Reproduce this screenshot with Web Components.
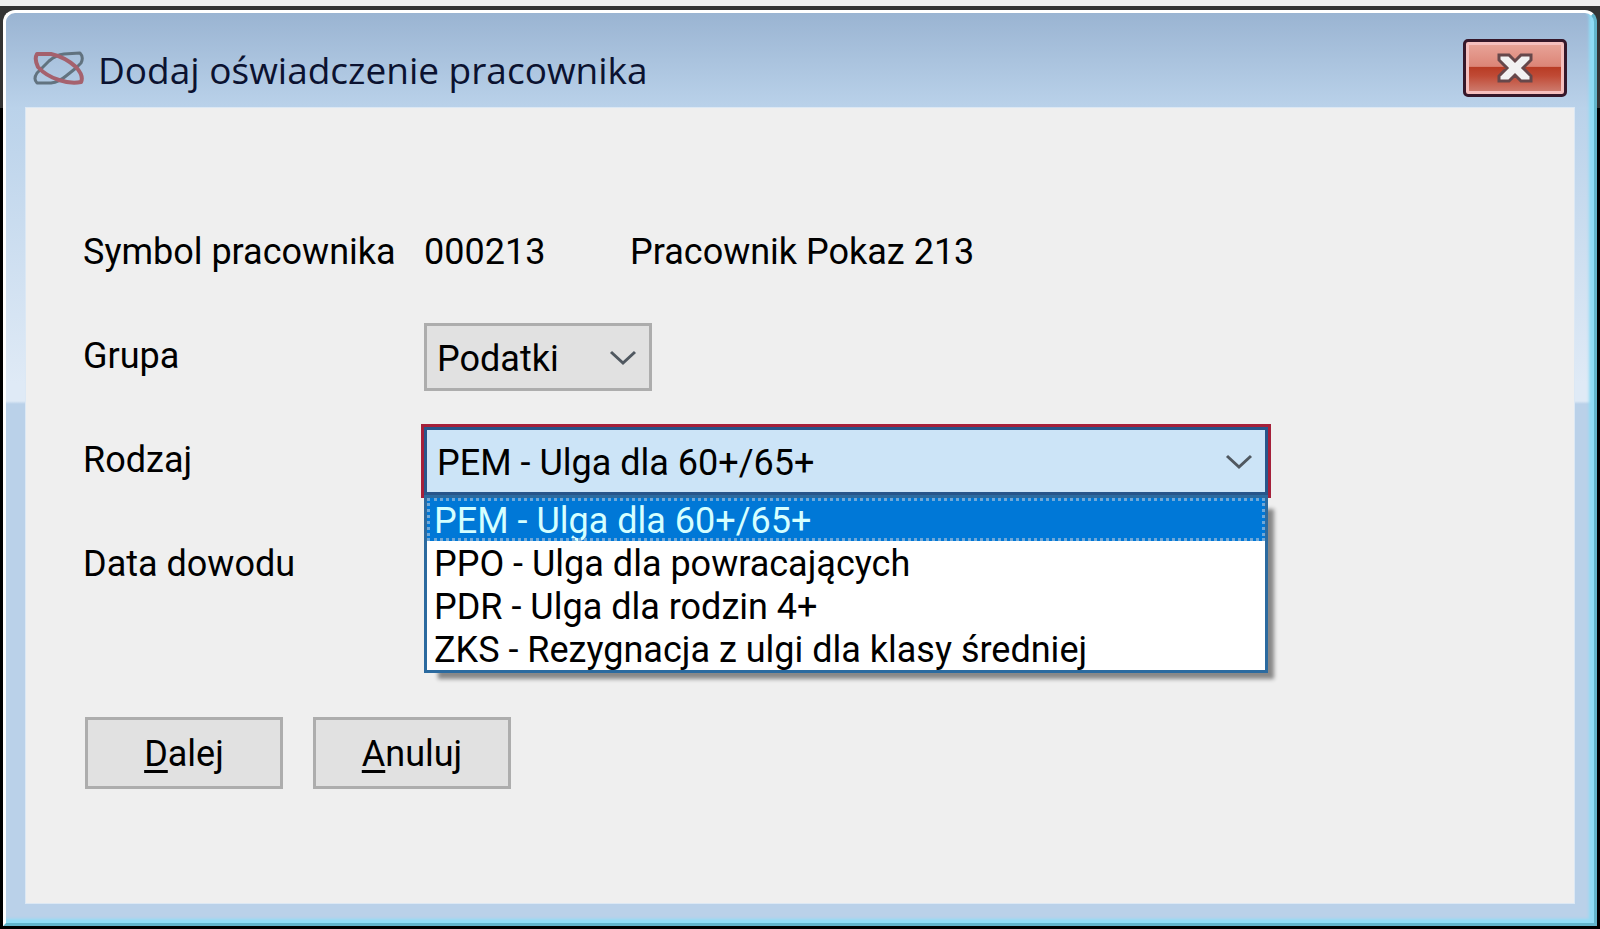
<!DOCTYPE html>
<html lang="pl">
<head>
	<meta charset="utf-8">
	<title>Dodaj oświadczenie pracownika</title>
	<style>
		html, body {
			height: 100%;
			margin: 0;
		}

		body {
			background: linear-gradient(#efefef 6px, #333 6px, #333 108px, #000 108px);
			box-sizing: border-box;
			color: #000;
			font: 36px/48px Roboto, "Liberation Sans", sans-serif;
			padding: 6px 3px 3px;
		}
	</style>
</head>
<body>
	<dialog-window caption="Dodaj oświadczenie pracownika">
		<statement-form></statement-form>
	</dialog-window>

	<script>
		// Window frame with the title bar, the content goes in the slot
		class DialogWindow extends HTMLElement {
			constructor() {
				super();
				const shadow = this.attachShadow({ mode: 'open' });
				shadow.innerHTML = `
					<style>
						:host {
							background:
								linear-gradient(#9ab4d2, #bad2ea 95px, #dfeaf6 370px, #dfeaf6 388px, #bad1e9 391px);
							border-bottom: 3px solid #62b5cb;
							border-left: 3px solid #fff;
							border-radius: 12px 12px 0 0;
							border-right: 3px solid #62b5cb;
							border-top: 3px solid #fff;
							box-shadow: inset -5px -4px 3px #8edcf5, 0 -4px 0 #333;
							box-sizing: border-box;
							display: flex;
							flex-direction: column;
							height: calc(100% - 4px);
							margin-top: 4px;
							padding: 0 20px 20px;
						}

						header {
							align-items: center;
							display: flex;
							flex: none;
							gap: 11px;
							height: 95px;
							padding: 18px 7px 0;
							box-sizing: border-box;
						}

						h1 {
							color: #0b1230;
							flex: 1;
							font: 37px/48px "Open Sans", "Noto Sans", sans-serif;
							margin: 0;
						}

						header > svg {
							height: 38px;
							margin-top: -4px;
							width: 54px;
						}

						button {
							background: linear-gradient(#e9a69b, #dc8577 47%, #b83b24 48%, #c04a35 65%, #d08377);
							border: 3px solid #35172a;
							border-radius: 5px;
							box-shadow: inset 0 0 0 3px #f5bfbe;
							box-sizing: border-box;
							display: grid;
							height: 58px;
							margin-top: -4px;
							padding: 0;
							place-items: center;
							width: 104px;
						}

						button svg {
							height: 32px;
							width: 38px;
						}

						main {
							background: #efefef;
							box-sizing: border-box;
							flex: 1;
							outline: 1px solid #dce8f4;
						}
					</style>
					<header>
						<svg viewBox="0 0 54 38" fill="none" stroke-width="3" stroke-linejoin="round" opacity=".85" aria-hidden="true">
							<path d="M31 5L47 4Q51 8 48 14L43 19L33 27Q26 33 18 34L4 34Q0 30 4 24L16 12Q23 6 31 5Z" stroke="#55656f"/>
							<path d="M4 5L18 5Q32 8 43 18Q51 27 48 33Q38 35 26 31Q13 27 5 18Q1 10 4 5Z" stroke="#a4505a" stroke-width="4"/>
						</svg>
						<h1></h1>
						<button type="button" aria-label="Zamknij">
							<svg viewBox="0 0 38 32" aria-hidden="true">
								<path d="M3 3H13L19 9L25 3H35V8L27 16L35 24V29H25L19 23L13 29H3V24L11 16L3 8Z" fill="#f2f2f2" stroke="#66484b" stroke-width="3"/>
							</svg>
						</button>
					</header>
					<main><slot></slot></main>`;
			}

			connectedCallback() {
				this.shadowRoot.querySelector('h1').textContent = this.getAttribute('caption');
			}
		}

		// Drop-down field. Set "open" to show the list of options under it
		class DropDown extends HTMLElement {
			constructor() {
				super();
				this.attachShadow({ mode: 'open' });
			}

			connectedCallback() {
				const options = this.getAttribute('options').split('|');
				this.shadowRoot.innerHTML = `
					<style>
						:host {
							display: block;
							position: relative;
						}

						select {
							appearance: none;
							background: #e1e1e1;
							border: 3px solid #adadad;
							border-radius: 0;
							box-sizing: border-box;
							color: inherit;
							display: block;
							font: inherit;
							height: 68px;
							outline: none;
							padding: 4px 10px 0;
							width: 100%;
						}

						svg {
							height: 16px;
							pointer-events: none;
							position: absolute;
							right: 15px;
							top: 27px;
							width: 28px;
						}

						ul {
							display: none;
						}

						:host([open]) select {
							background: #cce4f7;
							border-color: #28558a;
							box-shadow: 0 0 0 3px #a5203a;
						}

						:host([open]) ul {
							background: #fff;
							border: 3px solid #2b6a9f;
							box-shadow: 10px 10px 4px -4px #888;
							box-sizing: border-box;
							display: block;
							left: 0;
							list-style: none;
							margin: 0;
							padding: 0;
							position: absolute;
							right: 0;
							top: 100%;
							z-index: 1;
						}

						li {
							line-height: 39px;
							padding: 4px 7px 0;
							white-space: nowrap;
						}

						li[aria-selected="true"] {
							background: #0078d7;
							color: #d5ffff;
							outline: 3px dotted #6fa8d8;
							outline-offset: -3px;
						}
					</style>
					<select aria-label="${this.getAttribute('label')}">
						${options.map((text) => `<option>${text}</option>`).join('')}
					</select>
					<svg viewBox="0 0 28 16" fill="none" aria-hidden="true">
						<path d="M2 2L14 13L26 2" stroke="#505860" stroke-width="3"/>
					</svg>
					<ul role="listbox">
						${options.map((text, i) => `<li role="option" aria-selected="${i === 0}">${text}</li>`).join('')}
					</ul>`;
			}
		}

		// One line of the form: caption on the left, content on the right
		class FormRow extends HTMLElement {
			constructor() {
				super();
				const shadow = this.attachShadow({ mode: 'open' });
				shadow.innerHTML = `
					<style>
						:host {
							align-items: center;
							display: grid;
							grid-template-columns: 341px 1fr;
							height: 104px;
						}

						.caption {
							padding-bottom: 2px;
							white-space: nowrap;
						}
					</style>
					<span class="caption"></span>
					<slot></slot>`;
			}

			connectedCallback() {
				this.shadowRoot.querySelector('.caption').textContent = this.getAttribute('caption');
			}
		}

		class PushButton extends HTMLElement {
			constructor() {
				super();
				const shadow = this.attachShadow({ mode: 'open' });
				shadow.innerHTML = `
					<style>
						:host {
							display: block;
						}

						button {
							background: #e1e1e1;
							border: 3px solid #adadad;
							box-sizing: border-box;
							color: inherit;
							font: inherit;
							height: 72px;
							padding: 2px 0 0;
							width: 198px;
						}

						::slotted(u) {
							text-decoration-skip-ink: none;
							text-decoration-thickness: 3px;
							text-underline-offset: 4px;
						}
					</style>
					<button type="button"><slot></slot></button>`;
			}
		}

		class StatementForm extends HTMLElement {
			constructor() {
				super();
				const shadow = this.attachShadow({ mode: 'open' });
				shadow.innerHTML = `
					<style>
						:host {
							display: block;
							padding: 93px 57px 0;
						}

						.employee {
							display: grid;
							grid-template-columns: 206px 1fr;
							padding-bottom: 2px;
						}

						.group {
							width: 228px;
						}

						.kind {
							width: 60%;
							min-width: 844px;
						}

						footer {
							display: flex;
							gap: 30px;
							padding: 100px 2px 0;
						}
					</style>
					<form-row caption="Symbol pracownika">
						<div class="employee"><span>000213</span><span>Pracownik Pokaz 213</span></div>
					</form-row>
					<form-row caption="Grupa">
						<drop-down class="group" label="Grupa" options="Podatki"></drop-down>
					</form-row>
					<form-row caption="Rodzaj">
						<drop-down class="kind" open label="Rodzaj" options="PEM - Ulga dla 60+/65+|PPO - Ulga dla powracających|PDR - Ulga dla rodzin 4+|ZKS - Rezygnacja z ulgi dla klasy średniej"></drop-down>
					</form-row>
					<form-row caption="Data dowodu"></form-row>
					<footer>
						<push-button><u>D</u>alej</push-button>
						<push-button><u>A</u>nuluj</push-button>
					</footer>`;
			}
		}

		customElements.define('dialog-window', DialogWindow);
		customElements.define('drop-down', DropDown);
		customElements.define('form-row', FormRow);
		customElements.define('push-button', PushButton);
		customElements.define('statement-form', StatementForm);
	</script>
</body>
</html>
